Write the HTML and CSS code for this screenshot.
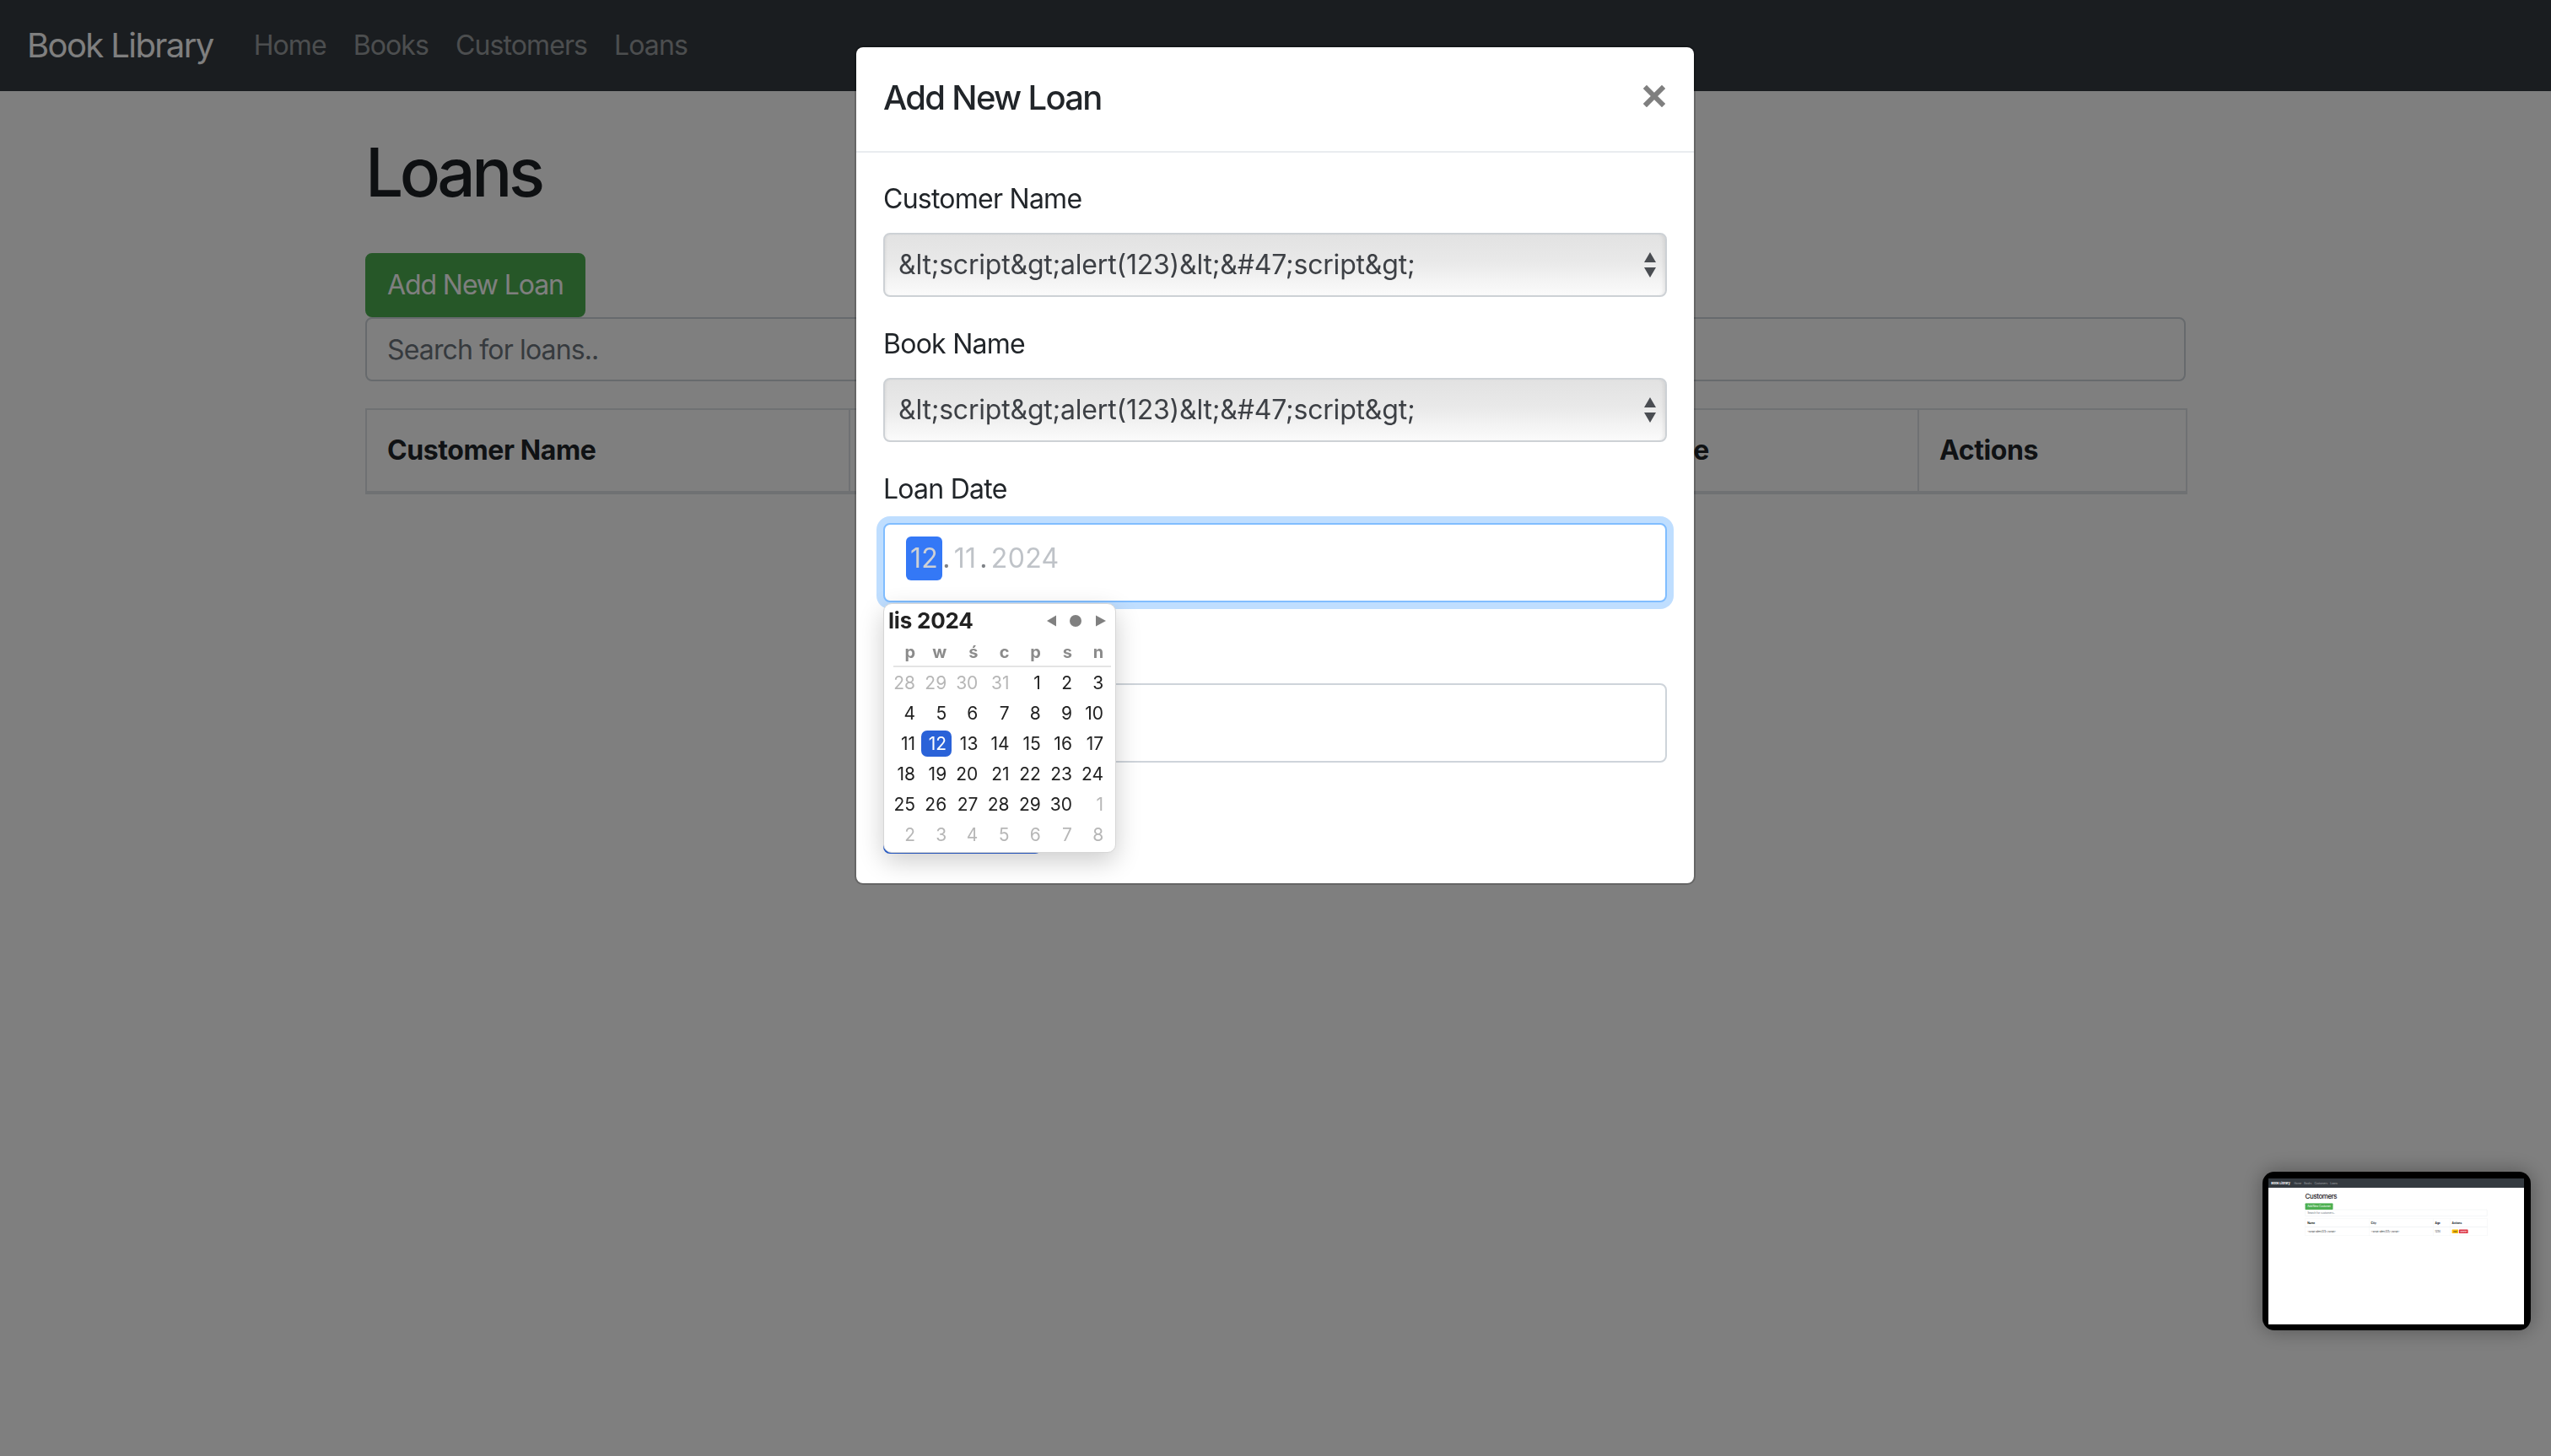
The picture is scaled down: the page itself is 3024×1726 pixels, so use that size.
FILE: index.html
```html
<!DOCTYPE html>
<html lang="pl">
<head>
<meta charset="utf-8">
<title>Loans - Book Library</title>
<link rel="stylesheet" href="styles.css">
</head>
<body>
<div class="page">
  <nav class="navbar">
    <a class="brand">Book Library</a>
    <ul class="nav-links">
      <li><a class="nav-link">Home</a></li>
      <li><a class="nav-link">Books</a></li>
      <li><a class="nav-link">Customers</a></li>
      <li><a class="nav-link">Loans</a></li>
    </ul>
  </nav>
  <main class="container">
    <h1 class="page-title">Loans</h1>
    <button class="btn btn-success">Add New Loan</button>
    <input class="search" type="text" placeholder="Search for loans..">
    <table class="table loans-table">
      <thead>
        <tr>
          <th class="c-customer">Customer Name</th>
          <th class="c-book">Book Name</th>
          <th class="c-loan">Loan Date</th>
          <th class="c-return">Return Date</th>
          <th class="c-actions">Actions</th>
        </tr>
      </thead>
      <tbody></tbody>
    </table>
  </main>
</div>

<div class="backdrop"></div>

<div class="modal">
  <div class="modal-header">
    <h5 class="modal-title">Add New Loan</h5>
    <svg class="close" width="26" height="26" viewBox="0 0 26 26"><path d="M4 4 L22 22 M22 4 L4 22" stroke="#7f7f7f" stroke-width="6" stroke-linecap="square"/></svg>
  </div>
  <form class="modal-body">
    <div class="form-group">
      <label class="label">Customer Name</label>
      <div class="select-wrap">
        <div class="select">&amp;lt;script&amp;gt;alert(123)&amp;lt;&amp;#47;script&amp;gt;</div>
        <svg class="select-arrows" width="14" height="30" viewBox="0 0 14 30"><path d="M7 0 L14 12 L0 12 Z M0 18 L14 18 L7 30 Z" fill="#4a4d52"/></svg>
      </div>
    </div>
    <div class="form-group">
      <label class="label">Book Name</label>
      <div class="select-wrap">
        <div class="select">&amp;lt;script&amp;gt;alert(123)&amp;lt;&amp;#47;script&amp;gt;</div>
        <svg class="select-arrows" width="14" height="30" viewBox="0 0 14 30"><path d="M7 0 L14 12 L0 12 Z M0 18 L14 18 L7 30 Z" fill="#4a4d52"/></svg>
      </div>
    </div>
    <div class="form-group date-group">
      <label class="label">Loan Date</label>
      <div class="date-input focused">
        <span class="seg seg-active">12</span><span class="sep">.</span><span class="seg">11</span><span class="sep">.</span><span class="seg">2024</span>
      </div>
      <div class="calendar">
        <div class="cal-head">
          <span class="cal-title">lis 2024</span>
          <svg class="cal-nav" width="70" height="14" viewBox="0 0 70 14"><path d="M0 7 L11 0.5 L11 13.5 Z" fill="#808080"/><circle cx="34" cy="7" r="7" fill="#808080"/><path d="M58 0.5 L70 7 L58 13.5 Z" fill="#808080"/></svg>
        </div>
        <div class="cal-grid cal-dow">
          <span>p</span><span>w</span><span>ś</span><span>c</span><span>p</span><span>s</span><span>n</span>
        </div>
        <div class="cal-sep"></div>
        <div class="cal-grid cal-days">
          <span class="out">28</span><span class="out">29</span><span class="out">30</span><span class="out">31</span><span>1</span><span>2</span><span>3</span>
          <span>4</span><span>5</span><span>6</span><span>7</span><span>8</span><span>9</span><span>10</span>
          <span>11</span><span class="sel">12</span><span>13</span><span>14</span><span>15</span><span>16</span><span>17</span>
          <span>18</span><span>19</span><span>20</span><span>21</span><span>22</span><span>23</span><span>24</span>
          <span>25</span><span>26</span><span>27</span><span>28</span><span>29</span><span>30</span><span class="out">1</span>
          <span class="out">2</span><span class="out">3</span><span class="out">4</span><span class="out">5</span><span class="out">6</span><span class="out">7</span><span class="out">8</span>
        </div>
      </div>
    </div>
    <div class="form-group">
      <label class="label">Return Date</label>
      <div class="date-input"><span class="seg">dd</span><span class="sep">.</span><span class="seg">mm</span><span class="sep">.</span><span class="seg">rrrr</span></div>
    </div>
    <button class="btn btn-primary" type="button">Add Loan</button>
  </form>
</div>

<div class="thumb">
  <div class="thumb-screen">
    <div class="mini">
      <nav class="navbar">
        <a class="brand">Book Library</a>
        <ul class="nav-links">
          <li><a class="nav-link">Home</a></li>
          <li><a class="nav-link">Books</a></li>
          <li><a class="nav-link">Customers</a></li>
          <li><a class="nav-link">Loans</a></li>
        </ul>
      </nav>
      <main class="container">
        <h1 class="page-title">Customers</h1>
        <button class="btn btn-success">Add New Customer</button>
        <input class="search" type="text" placeholder="Search for customers..">
        <table class="table mini-table">
          <thead>
            <tr><th class="m-name">Name</th><th class="m-city">City</th><th class="m-age">Age</th><th class="m-actions">Actions</th></tr>
          </thead>
          <tbody>
            <tr>
              <td>&lt;script&gt;alert(123)&lt;/script&gt;</td>
              <td>&lt;script&gt;alert(123)&lt;/script&gt;</td>
              <td>1234</td>
              <td><span class="btn-sm btn-warning">Edit</span><span class="btn-sm btn-danger">Delete</span></td>
            </tr>
          </tbody>
        </table>
      </main>
    </div>
  </div>
</div>
</body>
</html>
```
FILE: styles.css
```css
html, body {
  margin: 0;
  padding: 0;
}
body {
  width: 3024px;
  height: 1726px;
  overflow: hidden;
  font-family: Inter, "Noto Sans", "Liberation Sans", sans-serif;
  font-size: 32px;
  line-height: 1.5;
  letter-spacing: -0.75px;
  color: #212529;
  background: #fff;
  position: relative;
}
* { box-sizing: border-box; }

/* ---------- navbar ---------- */
.navbar {
  display: flex;
  align-items: center;
  height: 108px;
  padding: 0 32px;
  background: #343a40;
}
.brand {
  font-size: 40px;
  line-height: 60px;
  color: #fff;
  margin-right: 32px;
  letter-spacing: -1.6px;
}
.nav-links {
  display: flex;
  list-style: none;
  margin: 0;
  padding: 0;
}
.nav-link {
  display: block;
  padding: 0 16px;
  color: rgba(255, 255, 255, 0.5);
  letter-spacing: -0.9px;
}

/* ---------- page ---------- */
.container {
  width: 2158px;
  margin: 0 auto;
  padding-top: 48px;
  display: flex;
  flex-direction: column;
  align-items: flex-start;
}
.page-title {
  margin: 0 0 48px;
  font-size: 80px;
  font-weight: 500;
  line-height: 1.2;
  letter-spacing: -4.5px;
  color: #1d2024;
}
.btn {
  font-family: inherit;
  font-size: 32px;
  line-height: 48px;
  letter-spacing: -1.1px;
  padding: 12px 24px;
  border: 2px solid transparent;
  border-radius: 8px;
  color: #fff;
}
.btn-success {
  background: #4caf50;
  border-color: #4caf50;
}
.btn-primary {
  background: #2b63d9;
  border-color: #2b63d9;
}
.search {
  display: block;
  width: 100%;
  height: 76px;
  padding: 12px 24px;
  font-family: inherit;
  font-size: 32px;
  letter-spacing: -0.85px;
  color: #495057;
  border: 2px solid #ced4da;
  border-radius: 8px;
  background: #fff;
}
.search::placeholder { color: #6c757d; }

.table {
  width: 100%;
  margin-top: 32px;
  border-collapse: collapse;
  table-layout: fixed;
}
.table th, .table td {
  padding: 24px;
  border: 2px solid #dee2e6;
  text-align: left;
  vertical-align: top;
  white-space: nowrap;
  overflow: hidden;
}
.table th {
  border-bottom-width: 4px;
  font-weight: 700;
  letter-spacing: -0.4px;
}
.c-customer { width: 573px; }
.c-book { width: 405px; }
.c-loan { width: 409px; }
.c-return { width: 453px; }
.c-actions { width: 318px; }

/* ---------- backdrop ---------- */
.backdrop {
  position: fixed;
  inset: 0;
  background: rgba(0, 0, 0, 0.5);
}

/* ---------- modal ---------- */
.modal {
  position: fixed;
  top: 54px;
  left: 1013px;
  width: 997px;
  background: #fff;
  border: 2px solid rgba(0, 0, 0, 0.2);
  background-clip: padding-box;
  border-radius: 10px;
}
.modal-header {
  display: flex;
  justify-content: space-between;
  align-items: flex-start;
  padding: 30px 34px 33px 32px;
  border-bottom: 2px solid #e9ecef;
}
.modal-title {
  margin: 0;
  font-size: 40px;
  font-weight: 500;
  line-height: 60px;
  letter-spacing: -1.7px;
}
.close {
  margin-top: 15px;
}
.modal-body {
  display: block;
  padding: 31px 32px 35px;
}
.form-group {
  margin-bottom: 32px;
}
.label {
  display: block;
  margin-bottom: 16px;
  line-height: 48px;
}
.select-wrap {
  position: relative;
}
.select {
  height: 76px;
  padding: 12px 16px;
  line-height: 48px;
  letter-spacing: -0.2px;
  color: #3d4045;
  border: 2px solid #cdd1d5;
  border-radius: 8px;
  background: linear-gradient(to bottom, #e2e2e2 0%, #e9e9e9 45%, #f3f3f3 75%, #fbfbfb 100%);
  box-shadow: inset -4px 0 4px -2px rgba(0, 0, 0, 0.08), inset 3px 0 3px -2px rgba(0, 0, 0, 0.06);
}
.select-arrows {
  position: absolute;
  right: 13px;
  top: 23px;
}
.date-group {
  position: relative;
}
.date-input {
  height: 94px;
  padding: 0 0 10px 25px;
  display: flex;
  align-items: center;
  border: 2px solid #ced4da;
  border-radius: 8px;
  background: #fff;
  color: #bfc3c8;
  letter-spacing: 0.3px;
}
.date-input.focused {
  border-color: #80bdff;
  box-shadow: 0 0 0 8px rgba(0, 123, 255, 0.25);
}
.seg {
  line-height: 52px;
  padding: 0 4px;
}
.sep {
  line-height: 52px;
  color: #7e8287;
}
.seg-active {
  background: #3478f6;
  color: #cdd0d5;
  border-radius: 6px;
  padding: 0 5px;
}

/* ---------- calendar popup ---------- */
.calendar {
  position: absolute;
  left: 0;
  top: calc(100% + 1px);
  width: 276px;
  height: 296px;
  background: #fff;
  border: 1px solid #d6d6d6;
  border-radius: 10px;
  box-shadow: 0 10px 30px rgba(0, 0, 0, 0.2);
  z-index: 5;
  letter-spacing: 0;
}
.cal-head {
  display: flex;
  justify-content: space-between;
  align-items: center;
  height: 40px;
  padding: 0 11px 0 5px;
}
.cal-title {
  font-size: 26px;
  font-weight: 700;
  color: #222;
  line-height: 30px;
  letter-spacing: -0.2px;
}
.cal-grid {
  display: grid;
  grid-template-columns: repeat(7, 36px);
  column-gap: 1.2px;
  padding-left: 7px;
}
.cal-grid span {
  text-align: right;
  padding-right: 6px;
}
.cal-dow {
  height: 33px;
  align-items: center;
  font-size: 20px;
  font-weight: 700;
  color: #8b8b8b;
  line-height: 24px;
}
.cal-sep {
  height: 2px;
  margin: 0 5px 0 11px;
  background: #e4e4e4;
}
.cal-days {
  grid-auto-rows: 36px;
  align-items: center;
  font-size: 21px;
  color: #222;
}
.cal-days span {
  height: 31px;
  line-height: 31px;
  border-radius: 7px;
}
.cal-days .out { color: #b7b7b7; }
.cal-days .sel {
  background: #2a62d8;
  color: #fff;
}

/* ---------- screenshot thumbnail ---------- */
.thumb {
  position: fixed;
  left: 2682px;
  top: 1389px;
  width: 318px;
  height: 188px;
  padding: 8px 8px 7px 7px;
  background: #000;
  border-radius: 14px;
  box-shadow: 0 0 24px rgba(0, 0, 0, 0.35);
}
.thumb-screen {
  width: 303px;
  height: 173px;
  overflow: hidden;
  background: #fff;
}
.mini {
  width: 3030px;
  height: 1730px;
  background: #fff;
  transform: scale(0.1);
  transform-origin: 0 0;
}
.mini .navbar { height: 110px; }
.mini .brand { font-weight: 600; }
.mini .page-title { margin-bottom: 40px; }
.m-name { width: 754px; }
.m-city { width: 760px; }
.m-age { width: 200px; }
.m-actions { width: 444px; }
.mini-table td { font-size: 28px; }
.btn-sm {
  display: inline-block;
  padding: 4px 16px;
  margin-right: 8px;
  border-radius: 6px;
  font-size: 26px;
}
.btn-warning { background: #ffc107; color: #212529; }
.btn-danger { background: #dc3545; color: #fff; }
```
